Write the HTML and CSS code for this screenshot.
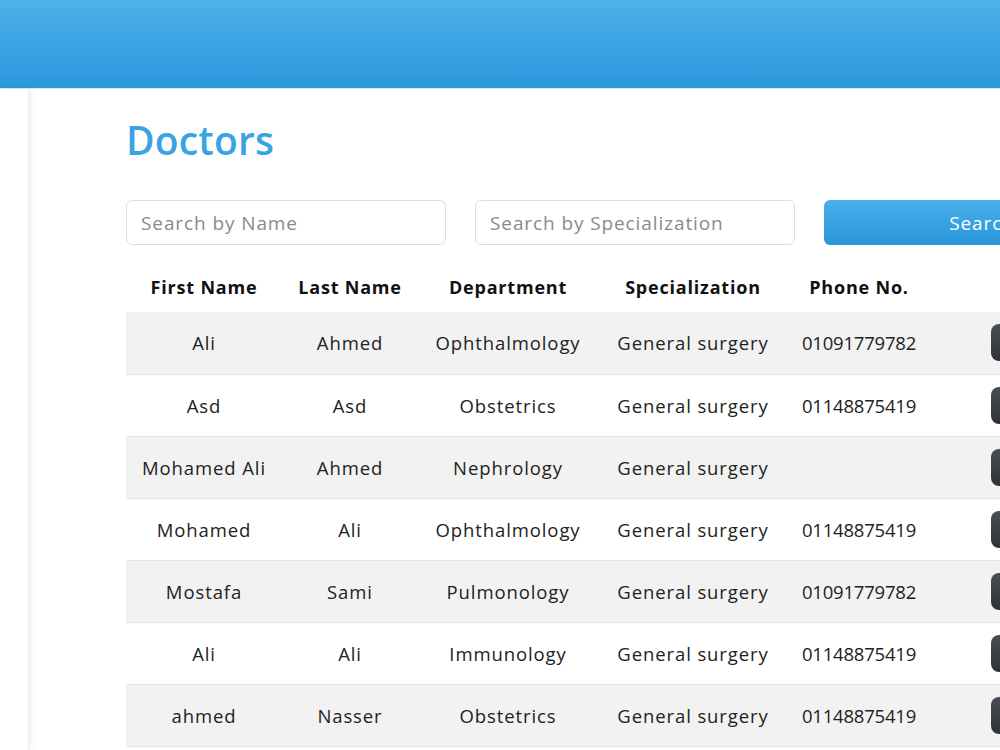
FILE: index.html
```html
<!DOCTYPE html>
<html lang="en">
<head>
  <meta charset="UTF-8">
  <title>Doctors</title>
  <link rel="stylesheet" href="styles.css">
</head>
<body>

  <header class="topbar"></header>

  <div class="layout">
    <aside class="sidebar"></aside>

    <main class="content">
      <h1 class="page-title">Doctors</h1>

      <form class="search-bar" onsubmit="return false">
        <input type="text" class="search-input" placeholder="Search by Name">
        <input type="text" class="search-input" placeholder="Search by Specialization">
        <button type="submit" class="search-btn">Search</button>
      </form>

      <table class="doctors-table">
        <thead>
          <tr>
            <th class="col-first">First Name</th>
            <th class="col-last">Last Name</th>
            <th class="col-dept">Department</th>
            <th class="col-spec">Specialization</th>
            <th class="col-phone">Phone No.</th>
            <th class="col-actions"></th>
          </tr>
        </thead>
        <tbody>
          <tr>
            <td>Ali</td><td>Ahmed</td><td>Ophthalmology</td><td>General surgery</td><td class="phone">01091779782</td>
            <td class="actions"><button class="action-btn" title="Edit"></button></td>
          </tr>
          <tr>
            <td>Asd</td><td>Asd</td><td>Obstetrics</td><td>General surgery</td><td class="phone">01148875419</td>
            <td class="actions"><button class="action-btn" title="Edit"></button></td>
          </tr>
          <tr>
            <td>Mohamed Ali</td><td>Ahmed</td><td>Nephrology</td><td>General surgery</td><td class="phone"></td>
            <td class="actions"><button class="action-btn" title="Edit"></button></td>
          </tr>
          <tr>
            <td>Mohamed</td><td>Ali</td><td>Ophthalmology</td><td>General surgery</td><td class="phone">01148875419</td>
            <td class="actions"><button class="action-btn" title="Edit"></button></td>
          </tr>
          <tr>
            <td>Mostafa</td><td>Sami</td><td>Pulmonology</td><td>General surgery</td><td class="phone">01091779782</td>
            <td class="actions"><button class="action-btn" title="Edit"></button></td>
          </tr>
          <tr>
            <td>Ali</td><td>Ali</td><td>Immunology</td><td>General surgery</td><td class="phone">01148875419</td>
            <td class="actions"><button class="action-btn" title="Edit"></button></td>
          </tr>
          <tr>
            <td>ahmed</td><td>Nasser</td><td>Obstetrics</td><td>General surgery</td><td class="phone">01148875419</td>
            <td class="actions"><button class="action-btn" title="Edit"></button></td>
          </tr>
        </tbody>
      </table>
    </main>
  </div>

</body>
</html>
```

FILE: styles.css
```css
* {
  box-sizing: border-box;
}

html, body {
  margin: 0;
  height: 100%;
  overflow: hidden;
}

body {
  font-family: "Open Sans", "Noto Sans", sans-serif;
  background: #fff;
  color: #1d1d1d;
}

.topbar {
  height: 89px;
  background: linear-gradient(to bottom, #4eb1ea, #2b98dc);
  border-bottom: 1px solid #cdeaf7;
}

.layout {
  display: flex;
  min-height: calc(100% - 89px);
}

.sidebar {
  width: 29px;
  flex-shrink: 0;
  background: #fff;
  border-right: 1px solid #ececec;
  box-shadow: 3px 0 5px rgba(0, 0, 0, 0.05);
}

.content {
  flex: 1;
  padding: 27px 0 0 97px;
  min-width: 1200px;
}

.page-title {
  margin: 0;
  font-size: 39px;
  line-height: 47px;
  font-weight: 600;
  color: #3aa3e3;
  letter-spacing: 0.2px;
}

.search-bar {
  display: flex;
  gap: 29px;
  margin-top: 37px;
}

.search-input {
  width: 320px;
  height: 45px;
  padding: 0 14px;
  border: 1px solid #dedede;
  border-radius: 6px;
  font-family: inherit;
  font-size: 19px;
  letter-spacing: 0.9px;
  color: #333;
}

.search-input::placeholder {
  color: #8a8a8a;
}

.search-btn {
  width: 316px;
  height: 45px;
  border: none;
  border-radius: 6px;
  background: linear-gradient(to bottom, #4aafea, #2996da);
  color: #fff;
  font-family: inherit;
  font-size: 19px;
  letter-spacing: 0.9px;
  cursor: pointer;
}

.doctors-table {
  margin-top: 17px;
  border-collapse: collapse;
  table-layout: fixed;
  width: 960px;
}

.doctors-table th {
  height: 50px;
  font-size: 18px;
  font-weight: 700;
  color: #111;
  text-align: center;
  letter-spacing: 0.8px;
}

.col-first { width: 156px; }
.col-last { width: 136px; }
.col-dept { width: 180px; }
.col-spec { width: 190px; }
.col-phone { width: 142px; }
.col-actions { width: 156px; }

.doctors-table td {
  height: 62px;
  font-size: 18.5px;
  letter-spacing: 0.9px;
  text-align: center;
  color: #222;
  border-bottom: 1px solid #e2e2e2;
  white-space: nowrap;
}

.doctors-table td.phone {
  letter-spacing: -0.2px;
}

.doctors-table tbody tr:nth-child(odd) {
  background: #f2f2f2;
}

.doctors-table td.actions {
  text-align: left;
  padding-left: 61px;
}

.action-btn {
  width: 80px;
  height: 37px;
  border: none;
  border-radius: 8px;
  background: linear-gradient(to bottom, #4a4d53, #2f3237);
  vertical-align: middle;
}
```
